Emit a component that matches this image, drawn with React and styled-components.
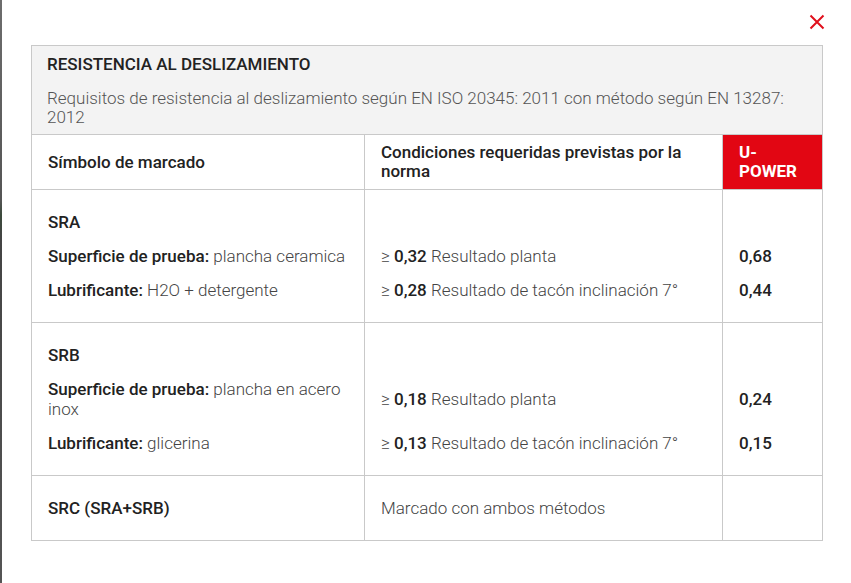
import styled, { createGlobalStyle } from "styled-components";

const GlobalStyle = createGlobalStyle`
  html, body {
    margin: 0;
    padding: 0;
    background: #ffffff;
    font-family: Roboto, "Liberation Sans", sans-serif;
    color: #222;
  }
`;

const Page = styled.div`
  display: flex;
  width: 851px;
  height: 583px;
  background: #fff;
`;

const EdgeStrip = styled.div`
  width: 2px;
  flex: none;
  background: linear-gradient(#6d6d6d 0, #555 200px, #3c4a3c 215px, #444 240px, #555 100%);
`;

const Modal = styled.div`
  flex: 1;
  display: flex;
  flex-direction: column;
  padding: 0 26px 0 29px;
`;

const CloseRow = styled.div`
  display: flex;
  justify-content: flex-end;
  height: 45px;
  padding-top: 14px;
  box-sizing: border-box;
  padding-right: 0;
`;

const CloseButton = styled.button`
  border: none;
  background: none;
  padding: 0;
  width: 16px;
  height: 16px;
  cursor: pointer;
  display: flex;
`;

const Table = styled.table`
  width: 792px;
  border-collapse: collapse;
  border: 1px solid #c9c9c9;
  font-size: 17px;
  table-layout: fixed;
`;

const Caption = styled.div`
  background: #f3f3f3;
  padding: 8px 15px 7px;
  text-align: left;
`;

const Title = styled.div`
  font-weight: 500;
  font-size: 17px;
  line-height: 20px;
  color: #222;
  text-transform: uppercase;
`;

const Subtitle = styled.div`
  margin-top: 15px;
  font-weight: 300;
  font-size: 17px;
  line-height: 19px;
  color: #555;
`;

const HeadCell = styled.th`
  text-align: left;
  vertical-align: ${(p) => (p.$brand ? "top" : "middle")};
  font-weight: ${(p) => (p.$brand ? 700 : 500)};
  font-size: 17px;
  line-height: 19px;
  padding: 8px 16px;
  border: 1px solid #c9c9c9;
  background: ${(p) => (p.$brand ? "#e20613" : "#fff")};
  color: ${(p) => (p.$brand ? "#fff" : "#222")};
  height: 38px;
`;

const Cell = styled.td`
  vertical-align: middle;
  font-weight: 300;
  line-height: 20px;
  color: #444;
  padding: ${(p) => (p.$first ? "22px" : "7px")} 16px
    ${(p) => (p.$last ? "22px" : "7px")};
  border-left: 1px solid #c9c9c9;
  border-right: 1px solid #c9c9c9;
  border-top: ${(p) => (p.$first ? "1px solid #c9c9c9" : "none")};
  border-bottom: ${(p) => (p.$last ? "1px solid #c9c9c9" : "none")};
`;

const Strong = styled.b`
  font-weight: 500;
  color: #222;
`;

const Value = styled.span`
  font-weight: 500;
  color: #222;
`;

const CloseIcon = () => (
  <svg width="16" height="16" viewBox="0 0 16 16">
    <path d="M1.5 1.5 L14.5 14.5 M14.5 1.5 L1.5 14.5" stroke="#e0101c" strokeWidth="2" fill="none" />
  </svg>
);

const groups = [
  {
    symbol: "SRA",
    lines: [
      {
        label: "Superficie de prueba:",
        text: "plancha ceramica",
        min: "0,32",
        desc: "Resultado planta",
        value: "0,68",
      },
      {
        label: "Lubrificante:",
        text: "H2O + detergente",
        min: "0,28",
        desc: "Resultado de tacón inclinación 7°",
        value: "0,44",
      },
    ],
  },
  {
    symbol: "SRB",
    lines: [
      {
        label: "Superficie de prueba:",
        text: "plancha en acero inox",
        min: "0,18",
        desc: "Resultado planta",
        value: "0,24",
      },
      {
        label: "Lubrificante:",
        text: "glicerina",
        min: "0,13",
        desc: "Resultado de tacón inclinación 7°",
        value: "0,15",
      },
    ],
  },
];

const Group = ({ group }) => {
  const last = group.lines.length - 1;
  return (
    <>
      <tr>
        <Cell $first>
          <Strong>{group.symbol}</Strong>
        </Cell>
        <Cell $first />
        <Cell $first />
      </tr>
      {group.lines.map((line, i) => (
        <tr key={i}>
          <Cell $last={i === last}>
            <Strong>{line.label}</Strong> {line.text}
          </Cell>
          <Cell $last={i === last}>
            ≥ <Value>{line.min}</Value> {line.desc}
          </Cell>
          <Cell $last={i === last}>
            <Value>{line.value}</Value>
          </Cell>
        </tr>
      ))}
    </>
  );
};

export default function App() {
  return (
    <>
      <GlobalStyle />
      <Page>
        <EdgeStrip />
        <Modal>
          <CloseRow>
            <CloseButton aria-label="Cerrar">
              <CloseIcon />
            </CloseButton>
          </CloseRow>
          <Table>
            <colgroup>
              <col style={{ width: 333 }} />
              <col style={{ width: 358 }} />
              <col style={{ width: 100 }} />
            </colgroup>
            <thead>
              <tr>
                <th colSpan={3} style={{ padding: 0 }}>
                  <Caption>
                    <Title>Resistencia al deslizamiento</Title>
                    <Subtitle>
                      Requisitos de resistencia al deslizamiento según EN ISO
                      20345: 2011 con método según EN 13287: 2012
                    </Subtitle>
                  </Caption>
                </th>
              </tr>
              <tr>
                <HeadCell>Símbolo de marcado</HeadCell>
                <HeadCell>Condiciones requeridas previstas por la norma</HeadCell>
                <HeadCell $brand>U-POWER</HeadCell>
              </tr>
            </thead>
            <tbody>
              {groups.map((g) => (
                <Group key={g.symbol} group={g} />
              ))}
              <tr>
                <Cell $first $last>
                  <Strong>SRC (SRA+SRB)</Strong>
                </Cell>
                <Cell $first $last>Marcado con ambos métodos</Cell>
                <Cell $first $last />
              </tr>
            </tbody>
          </Table>
        </Modal>
      </Page>
    </>
  );
}
